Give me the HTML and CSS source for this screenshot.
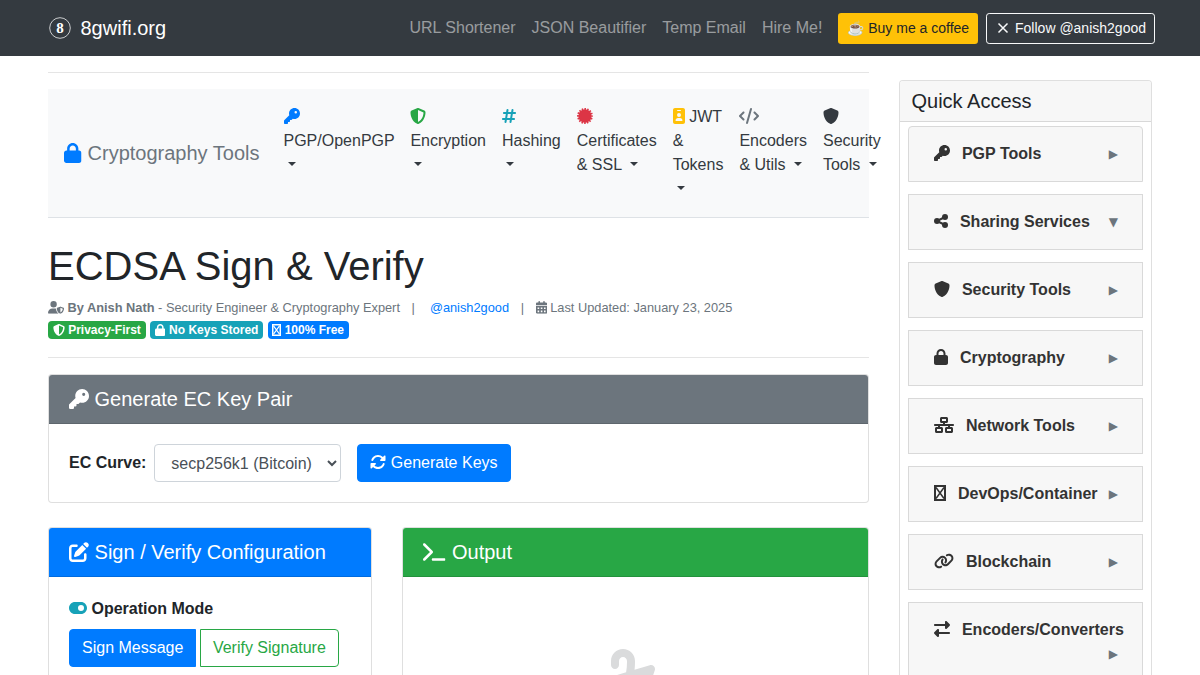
FILE: index.html
```html
<!DOCTYPE html>
<html lang="en">
  <head>
    <meta charset="UTF-8" />
    <meta name="viewport" content="width=device-width, initial-scale=1.0" />
    <title>ECDSA Sign &amp; Verify</title>
    <link rel="stylesheet" href="styles.css">
  </head>
  <body>
    <!-- Icon sprite -->
    <svg class="sprite" aria-hidden="true">
      <symbol id="key" viewBox="0 0 512 512"><path d="M336 352c97.2 0 176-78.8 176-176S433.2 0 336 0S160 78.8 160 176c0 18.7 2.9 36.8 8.3 53.7L7 391c-4.5 4.5-7 10.6-7 17v80c0 13.3 10.7 24 24 24h80c13.3 0 24-10.7 24-24V448h40c13.3 0 24-10.7 24-24V384h40c6.4 0 12.5-2.5 17-7l33.3-33.3c16.9 5.4 35 8.3 53.7 8.3zM376 96a40 40 0 1 1 0 80 40 40 0 1 1 0-80z" /></symbol>
      <symbol id="lock" viewBox="0 0 448 512"><path d="M144 144v48H304V144c0-44.2-35.8-80-80-80s-80 35.8-80 80zM80 192V144C80 64.5 144.5 0 224 0s144 64.5 144 144v48h16c35.3 0 64 28.7 64 64V448c0 35.3-28.7 64-64 64H64c-35.3 0-64-28.7-64-64V256c0-35.3 28.7-64 64-64H80z" /></symbol>
      <symbol id="shield-half" viewBox="0 0 512 512"><path d="M256 0c4.6 0 9.2 1 13.4 2.9L457.7 82.8c22 9.3 38.4 31 38.3 57.2c-.5 99.2-41.3 280.7-213.6 363.2c-16.7 8-36.1 8-52.8 0C57.3 420.7 16.5 239.2 16 140c-.1-26.2 16.3-47.9 38.3-57.2L242.7 2.9C246.8 1 251.4 0 256 0zm0 66.8V444.8C394 378 431.1 230.1 432 141.4L256 66.8z" /></symbol>
      <symbol id="shield" viewBox="0 0 512 512"><path d="M256 0c4.6 0 9.2 1 13.4 2.9L457.7 82.8c22 9.3 38.4 31 38.3 57.2c-.5 99.2-41.3 280.7-213.6 363.2c-16.7 8-36.1 8-52.8 0C57.3 420.7 16.5 239.2 16 140c-.1-26.2 16.3-47.9 38.3-57.2L242.7 2.9C246.8 1 251.4 0 256 0z" /></symbol>
      <symbol id="hashtag" viewBox="0 0 448 512"><path d="M181.3 32.4c17.4 2.9 29.2 19.4 26.3 36.8L197.8 128h95.1l11.5-69.3c2.9-17.4 19.4-29.2 36.8-26.3s29.2 19.4 26.3 36.8L357.8 128H416c17.7 0 32 14.3 32 32s-14.3 32-32 32H347.1L325.8 320H384c17.7 0 32 14.3 32 32s-14.3 32-32 32H315.1l-11.5 69.3c-2.9 17.4-19.4 29.2-36.8 26.3s-29.2-19.4-26.3-36.8l9.8-58.7H155.1l-11.5 69.3c-2.9 17.4-19.4 29.2-36.8 26.3s-29.2-19.4-26.3-36.8L90.2 384H32c-17.7 0-32-14.3-32-32s14.3-32 32-32h68.9l21.3-128H64c-17.7 0-32-14.3-32-32s14.3-32 32-32h68.9l11.5-69.3c2.9-17.4 19.4-29.2 36.8-26.3zM187.1 192L165.8 320h95.1l21.3-128H187.1z" /></symbol>
      <symbol id="certificate" viewBox="0 0 512 512">
        <circle cx="256" cy="256" r="214" />
        <circle cx="256" cy="256" r="220" fill="none" stroke="currentColor" stroke-width="70" pathLength="160" stroke-dasharray="5.5 4.5" stroke-dashoffset="2.75" />
      </symbol>
      <symbol id="id-badge" viewBox="0 0 384 512"><path fill-rule="evenodd" d="M64 0C28.7 0 0 28.7 0 64V448c0 35.3 28.7 64 64 64H320c35.3 0 64-28.7 64-64V64c0-35.3-28.7-64-64-64H64zm96 320h64c44.2 0 80 35.8 80 80c0 8.8-7.2 16-16 16H96c-8.8 0-16-7.2-16-16c0-44.2 35.8-80 80-80zm-32-96a64 64 0 1 1 128 0 64 64 0 1 1 -128 0zM144 64h96c8.8 0 16 7.2 16 16s-7.2 16-16 16H144c-8.8 0-16-7.2-16-16s7.2-16 16-16z" /></symbol>
      <symbol id="code" viewBox="0 0 640 512"><path d="M392.8 1.2c-17-4.9-34.7 5-39.6 22l-128 448c-4.9 17 5 34.7 22 39.6s34.7-5 39.6-22l128-448c4.9-17-5-34.7-22-39.6zm80.6 120.1c-12.5 12.5-12.5 32.8 0 45.3L562.7 256l-89.4 89.4c-12.5 12.5-12.5 32.8 0 45.3s32.8 12.5 45.3 0l112-112c12.5-12.5 12.5-32.8 0-45.3l-112-112c-12.5-12.5-32.8-12.5-45.3 0zm-306.7 0c-12.5-12.5-32.8-12.5-45.3 0l-112 112c-12.5 12.5-12.5 32.8 0 45.3l112 112c12.5 12.5 32.8 12.5 45.3 0s12.5-32.8 0-45.3L77.3 256l89.4-89.4c12.5-12.5 12.5-32.8 0-45.3z" /></symbol>
      <symbol id="user-shield" viewBox="0 0 640 512"><path d="M224 256A128 128 0 1 0 224 0a128 128 0 1 0 0 256zm-45.7 48C79.8 304 0 383.8 0 482.3C0 498.7 13.3 512 29.7 512H418.3c1.8 0 3.5-.2 5.3-.5c-76.3-55.1-99.8-141-103.1-200.2c-16.1-4.8-33.1-7.3-50.7-7.3H178.3zm308.8-78.3l-120 48C358 277.4 352 286.2 352 296c0 63.3 25.9 168.8 134.8 214.2c5.9 2.5 12.6 2.5 18.5 0C614.1 464.8 640 359.3 640 296c0-9.8-6-18.6-15.1-22.3l-120-48c-5.7-2.3-12.1-2.3-17.8 0zM591.4 312c-3.9 50.7-27.2 116.7-95.4 149.7V273.8L591.4 312z" /></symbol>
      <symbol id="calendar" viewBox="0 0 448 512"><path fill-rule="evenodd" d="M128 0c17.7 0 32 14.3 32 32V64H288V32c0-17.7 14.3-32 32-32s32 14.3 32 32V64h48c26.5 0 48 21.5 48 48v48H0V112C0 85.5 21.5 64 48 64H96V32c0-17.7 14.3-32 32-32zM0 192H448V464c0 26.5-21.5 48-48 48H48c-26.5 0-48-21.5-48-48V192zM64 256h64v64H64zM192 256h64v64h-64zM320 256h64v64h-64zM64 384h64v64H64zM192 384h64v64h-64zM320 384h64v64h-64z" /></symbol>
      <symbol id="box-x" viewBox="0 0 384 512"><path fill="none" stroke="currentColor" stroke-width="64" d="M32 32H352V480H32z" /><path fill="none" stroke="currentColor" stroke-width="48" d="M64 80L320 432M320 80L64 432" /></symbol>
      <symbol id="rotate" viewBox="0 0 512 512"><path d="M142.9 142.9c62.2-62.2 162.7-62.5 225.3-1L327 183c-6.9 6.9-8.9 17.2-5.2 26.2s12.5 14.8 22.2 14.8H472c13.3 0 24-10.7 24-24V72c0-9.7-5.8-18.5-14.8-22.2s-19.3-1.7-26.2 5.2L413.4 96.6c-87.6-86.5-228.7-86.2-315.8 1C73.2 122 55.6 150.7 44.8 181.4c-5.9 16.7 2.9 34.9 19.5 40.8s34.9-2.9 40.8-19.5c7.7-21.8 20.2-42.3 37.8-59.8zM16 312V440c0 9.7 5.8 18.5 14.8 22.2s19.3 1.7 26.2-5.2l41.6-41.6c87.6 86.5 228.7 86.2 315.8-1c24.4-24.4 42.1-53.1 52.9-83.7c5.9-16.7-2.9-34.9-19.5-40.8s-34.9 2.9-40.8 19.5c-7.7 21.8-20.2 42.3-37.8 59.8c-62.2 62.2-162.7 62.5-225.3 1L185 329c6.9-6.9 8.9-17.2 5.2-26.2s-12.5-14.8-22.2-14.8H40c-13.3 0-24 10.7-24 24z" /></symbol>
      <symbol id="edit" viewBox="0 0 512 512"><path d="M471.6 21.7c-21.9-21.9-57.3-21.9-79.2 0L362.3 51.7l97.9 97.9 30.1-30.1c21.9-21.9 21.9-57.3 0-79.2L471.6 21.7zm-299.2 220c-6.1 6.1-10.8 13.6-13.5 21.9l-29.6 88.8c-2.9 8.6-.6 18.1 5.8 24.6s15.9 8.7 24.6 5.8l88.8-29.6c8.2-2.7 15.7-7.4 21.9-13.5L437.7 172.3 339.7 74.3 172.4 241.7zM96 64C43 64 0 107 0 160V416c0 53 43 96 96 96H352c53 0 96-43 96-96V320c0-17.7-14.3-32-32-32s-32 14.3-32 32v96c0 17.7-14.3 32-32 32H96c-17.7 0-32-14.3-32-32V160c0-17.7 14.3-32 32-32h96c17.7 0 32-14.3 32-32s-14.3-32-32-32H96z" /></symbol>
      <symbol id="terminal" viewBox="0 0 576 512"><path d="M9.4 86.6C-3.1 74.1-3.1 53.9 9.4 41.4s32.8-12.5 45.3 0l192 192c12.5 12.5 12.5 32.8 0 45.3l-192 192c-12.5 12.5-32.8 12.5-45.3 0s-12.5-32.8 0-45.3L178.7 256 9.4 86.6zM256 416H544c17.7 0 32 14.3 32 32s-14.3 32-32 32H256c-17.7 0-32-14.3-32-32s14.3-32 32-32z" /></symbol>
      <symbol id="toggle" viewBox="0 0 576 512"><path d="M192 64C86 64 0 150 0 256S86 448 192 448H384c106 0 192-86 192-192s-86-192-192-192H192zm192 96a96 96 0 1 0 0 192 96 96 0 1 0 0-192z" fill-rule="evenodd" /></symbol>
      <symbol id="signature" viewBox="0 0 640 512"><path d="M192 128c0-17.7 14.3-32 32-32s32 14.3 32 32v7.8c0 27.7-2.4 55.3-7.1 82.5l-84.4 25.3c-40.6 12.2-68.4 49.6-68.4 92v71.9c0 40 32.5 72.5 72.5 72.5c26 0 50-13.9 62.9-36.5l13.9-24.3c26.8-47 46.5-97.7 58.4-150.5l94.4-28.3-12.5 37.5c-3.3 9.8-1.6 20.5 4.4 28.8s15.7 13.3 26 13.3H544c17.7 0 32-14.3 32-32s-14.3-32-32-32H460.4l18-53.9c3.8-11.3 .9-23.8-7.4-32.4s-20.7-11.8-32.2-8.4L316.4 198.1c2.4-20.7 3.6-41.4 3.6-62.3V128c0-53-43-96-96-96s-96 43-96 96v32c0 17.7 14.3 32 32 32s32-14.3 32-32V128z" /></symbol>
      <symbol id="share" viewBox="0 0 448 512">
        <circle cx="352" cy="128" r="96" />
        <circle cx="96" cy="256" r="96" />
        <circle cx="352" cy="384" r="96" />
        <path d="M352 128L96 256L352 384" fill="none" stroke="currentColor" stroke-width="64" />
      </symbol>
      <symbol id="network" viewBox="0 0 640 512"><path d="M256 64H384v64H256V64zM240 0c-26.5 0-48 21.5-48 48v96c0 26.5 21.5 48 48 48h48v32H32c-17.7 0-32 14.3-32 32s14.3 32 32 32h96v32H80c-26.5 0-48 21.5-48 48v96c0 26.5 21.5 48 48 48H240c26.5 0 48-21.5 48-48V368c0-26.5-21.5-48-48-48H192V288H448v32H400c-26.5 0-48 21.5-48 48v96c0 26.5 21.5 48 48 48H560c26.5 0 48-21.5 48-48V368c0-26.5-21.5-48-48-48H512V288h96c17.7 0 32-14.3 32-32s-14.3-32-32-32H352V192h48c26.5 0 48-21.5 48-48V48c0-26.5-21.5-48-48-48H240zM96 448V384H224v64H96zm320-64H544v64H416V384z" fill-rule="evenodd" /></symbol>
      <symbol id="link" viewBox="0 0 640 512"><path d="M579.8 267.7c56.5-56.5 56.5-148 0-204.5c-50-50-128.8-56.5-186.3-15.4l-1.6 1.1c-14.4 10.3-17.7 30.3-7.4 44.6s30.3 17.7 44.6 7.4l1.6-1.1c32.1-22.9 76-19.3 103.8 8.6c31.5 31.5 31.5 82.5 0 114L422.3 334.8c-31.5 31.5-82.5 31.5-114 0c-27.9-27.9-31.5-71.8-8.6-103.8l1.1-1.6c10.3-14.4 6.9-34.4-7.4-44.6s-34.4-6.9-44.6 7.4l-1.1 1.6C206.5 251.2 213 330 263 380c56.5 56.5 148 56.5 204.5 0L579.8 267.7zM60.2 244.3c-56.5 56.5-56.5 148 0 204.5c50 50 128.8 56.5 186.3 15.4l1.6-1.1c14.4-10.3 17.7-30.3 7.4-44.6s-30.3-17.7-44.6-7.4l-1.6 1.1c-32.1 22.9-76 19.3-103.8-8.6C74 372 74 321 105.5 289.5L217.7 177.2c31.5-31.5 82.5-31.5 114 0c27.9 27.9 31.5 71.8 8.6 103.9l-1.1 1.6c-10.3 14.4-6.9 34.4 7.4 44.6s34.4 6.9 44.6-7.4l1.1-1.6C433.5 260.8 427 182 377 132c-56.5-56.5-148-56.5-204.5 0L60.2 244.3z" /></symbol>
      <symbol id="exchange" viewBox="0 0 512 512"><path d="M32 96l320 0V32c0-12.9 7.8-24.6 19.8-29.6s25.7-2.2 34.9 6.9l96 96c6 6 9.4 14.1 9.4 22.6s-3.4 16.6-9.4 22.6l-96 96c-9.2 9.2-22.9 11.9-34.9 6.9s-19.8-16.6-19.8-29.6V160L32 160c-17.7 0-32-14.3-32-32s14.3-32 32-32zM480 352c17.7 0 32 14.3 32 32s-14.3 32-32 32H160v64c0 12.9-7.8 24.6-19.8 29.6s-25.7 2.2-34.9-6.9l-96-96c-6-6-9.4-14.1-9.4-22.6s3.4-16.6 9.4-22.6l96-96c9.2-9.2 22.9-11.9 34.9-6.9s19.8 16.6 19.8 29.6l0 64H480z" /></symbol>
    </svg>

    <header class="topbar">
      <a class="brand" href="#">
        <svg class="logo" viewBox="0 0 30 30" aria-hidden="true">
          <circle cx="15" cy="15" r="10.3" />
          <text x="15" y="20" text-anchor="middle">8</text>
        </svg>
        8gwifi.org
      </a>
      <nav class="top-links">
        <a href="#">URL Shortener</a>
        <a href="#">JSON Beautifier</a>
        <a href="#">Temp Email</a>
        <a href="#">Hire Me!</a>
        <a class="btn btn-sm btn-warning" href="#">☕ Buy me a coffee</a>
        <a class="btn btn-sm btn-outline-light" href="#"><svg class="cross" viewBox="0 0 16 14" aria-hidden="true"><path d="M3.5 2.5L12.5 11.5M12.5 2.5L3.5 11.5" /></svg> Follow @anish2good</a>
      </nav>
    </header>

    <div class="page">
      <main>
        <hr class="first-line" />

        <nav class="tools-nav">
          <a class="tools-brand" href="#"><svg class="icon w-448 blue"><use href="#lock" /></svg> Cryptography Tools</a>
          <a class="tool" href="#"><svg class="icon blue"><use href="#key" /></svg> PGP/OpenPGP <i class="caret"></i></a>
          <a class="tool" href="#"><svg class="icon green"><use href="#shield-half" /></svg> Encryption <i class="caret"></i></a>
          <a class="tool" href="#"><svg class="icon w-448 teal"><use href="#hashtag" /></svg> Hashing <i class="caret"></i></a>
          <a class="tool" href="#"><svg class="icon red"><use href="#certificate" /></svg> Certificates &amp; SSL <i class="caret"></i></a>
          <a class="tool" href="#"><svg class="icon w-384 yellow"><use href="#id-badge" /></svg> JWT &amp; Tokens <i class="caret"></i></a>
          <a class="tool" href="#"><svg class="icon w-640 gray"><use href="#code" /></svg> Encoders &amp; Utils <i class="caret"></i></a>
          <a class="tool" href="#"><svg class="icon"><use href="#shield" /></svg> Security Tools <i class="caret"></i></a>
        </nav>

        <h1>ECDSA Sign &amp; Verify</h1>
        <div class="byline">
          <svg class="icon w-640"><use href="#user-shield" /></svg> <strong>By Anish Nath</strong> - Security Engineer &amp; Cryptography Expert
          <span class="sep">|</span>
          <a class="handle" href="#">@anish2good</a>
          <span class="sep">|</span>
          <svg class="icon w-448 date-icon"><use href="#calendar" /></svg>Last Updated: January 23, 2025
        </div>
        <div class="badges">
          <span class="badge bg-green"><svg class="icon"><use href="#shield-half" /></svg> Privacy-First</span>
          <span class="badge bg-teal"><svg class="icon w-448"><use href="#lock" /></svg> No Keys Stored</span>
          <span class="badge bg-blue"><svg class="icon w-384"><use href="#box-x" /></svg> 100% Free</span>
        </div>
        <hr />

        <section class="card">
          <h5 class="card-header bg-gray"><svg class="icon"><use href="#key" /></svg> Generate EC Key Pair</h5>
          <div class="card-body key-form">
            <label for="curve">EC Curve:</label>
            <select id="curve">
              <option>secp256k1 (Bitcoin)</option>
            </select>
            <button class="btn btn-primary"><svg class="icon"><use href="#rotate" /></svg> Generate Keys</button>
          </div>
        </section>

        <div class="panels">
          <section class="card">
            <h5 class="card-header bg-blue"><svg class="icon"><use href="#edit" /></svg> Sign / Verify Configuration</h5>
            <div class="card-body">
              <div class="mode-label"><svg class="icon w-576 teal"><use href="#toggle" /></svg> Operation Mode</div>
              <div class="mode-group">
                <button class="btn btn-primary">Sign Message</button>
                <button class="btn btn-outline-success">Verify Signature</button>
              </div>
            </div>
          </section>

          <section class="card">
            <h5 class="card-header bg-green"><svg class="icon w-576"><use href="#terminal" /></svg> Output</h5>
            <div class="card-body placeholder">
              <svg class="icon w-640"><use href="#signature" /></svg>
            </div>
          </section>
        </div>
      </main>

      <aside class="card quick">
        <h5 class="quick-header">Quick Access</h5>
        <div class="quick-list">
          <a class="quick-item" href="#"><svg class="icon"><use href="#key" /></svg> PGP Tools<span class="arrow">▶</span></a>
          <a class="quick-item" href="#"><svg class="icon w-448"><use href="#share" /></svg> Sharing Services<span class="arrow">▼</span></a>
          <a class="quick-item" href="#"><svg class="icon"><use href="#shield" /></svg> Security Tools<span class="arrow">▶</span></a>
          <a class="quick-item" href="#"><svg class="icon w-448"><use href="#lock" /></svg> Cryptography<span class="arrow">▶</span></a>
          <a class="quick-item" href="#"><svg class="icon w-640"><use href="#network" /></svg> Network Tools<span class="arrow">▶</span></a>
          <a class="quick-item" href="#"><svg class="icon w-384"><use href="#box-x" /></svg> DevOps/Container<span class="arrow">▶</span></a>
          <a class="quick-item" href="#"><svg class="icon w-640"><use href="#link" /></svg> Blockchain<span class="arrow">▶</span></a>
          <a class="quick-item" href="#"><svg class="icon"><use href="#exchange" /></svg> Encoders/Converters<span class="arrow">▶</span></a>
        </div>
      </aside>
    </div>
  </body>
</html>
```

FILE: styles.css
```css
/*
  Global styles
*/

* {
  margin: 0;
  padding: 0;
  box-sizing: border-box;
}
:root {
  --blue: #007bff;
  --green: #28a745;
  --teal: #17a2b8;
  --red: #dc3545;
  --yellow: #ffc107;
  --gray: #6c757d;
  --dark: #343a40;
  --line: rgba(0, 0, 0, 0.125);
}
body {
  height: 100vh;
  overflow: hidden;
  color: #212529;
  font-size: 16px;
  line-height: 1.5;
  background-color: #fff;
  font-family: "Liberation Sans", Arial, sans-serif;
}
a {
  color: inherit;
  text-decoration: none;
}
hr {
  border: 0;
  margin: 16px 0;
  border-top: 1px solid rgba(0, 0, 0, 0.1);
}
h1 {
  font-size: 40px;
  font-weight: 400;
  line-height: 1.2;
  margin: 24px 0 8px;
}
h5 {
  font-size: 20px;
  font-weight: 400;
  line-height: 1.2;
}

/*
  Utilities
*/

.blue { color: var(--blue); }
.green { color: var(--green); }
.teal { color: var(--teal); }
.red { color: var(--red); }
.yellow { color: var(--yellow); }
.gray { color: var(--gray); }
.bg-blue { background-color: var(--blue); }
.bg-green { background-color: var(--green); }
.bg-teal { background-color: var(--teal); }
.bg-gray { background-color: var(--gray); }

.sprite {
  display: none;
}
.icon {
  width: 1em;
  height: 1em;
  fill: currentColor;
  vertical-align: -0.125em;
}
.icon.w-384 { width: 0.75em; }
.icon.w-448 { width: 0.875em; }
.icon.w-576 { width: 1.125em; }
.icon.w-640 { width: 1.25em; }

.btn {
  display: inline-block;
  color: #fff;
  font: inherit;
  padding: 6px 12px;
  border-radius: 4px;
  white-space: nowrap;
  border: 1px solid transparent;
  background-color: transparent;
}
.btn-primary {
  border-color: var(--blue);
  background-color: var(--blue);
}
.btn-outline-success {
  color: var(--green);
  border-color: var(--green);
}
.btn-sm {
  font-size: 14px;
  padding: 4px 8px;
  border-radius: 3.2px;
}

/*
  Component styles
*/

/* [1] Top bar */
.topbar {
  height: 56px;
  padding: 0 45px;
  display: flex;
  align-items: center;
  justify-content: space-between;
  background-color: var(--dark);
}
.brand {
  display: flex;
  gap: 5.5px;
  color: #fff;
  font-size: 20px;
  align-items: center;
}
.logo {
  width: 30px;
  height: 30px;
}
.logo circle {
  fill: none;
  stroke: #c9cbcd;
}
.logo text {
  fill: #fff;
  font: bold 15px "Liberation Serif", serif;
}
.top-links {
  display: flex;
  gap: 16px;
  align-items: center;
  color: rgba(255, 255, 255, 0.5);
}
.top-links .btn-warning {
  color: #212529;
  background-color: var(--yellow);
}
.top-links .btn-outline-light {
  color: #f8f9fa;
  margin-left: -8px;
  border-color: #f8f9fa;
}
.cross {
  width: 16px;
  height: 14px;
  fill: none;
  stroke: currentColor;
  stroke-width: 1.5;
  vertical-align: -2px;
}

/* [2] Layout */
.page {
  display: grid;
  gap: 30px;
  padding: 0 48px;
  align-items: start;
  grid-template-columns: 820.5px 253.5px;
}
main {
  min-width: 0;
}
.panels {
  display: grid;
  gap: 30px;
  margin-top: 24px;
  grid-template-columns: 324.4px 1fr;
}

/* [3] Tools navigation */
.tools-nav {
  display: flex;
  height: 129px;
  padding: 8px 16px;
  color: var(--dark);
  background-color: #f8f9fa;
  border-bottom: 1px solid #dee2e6;
}
.tools-brand {
  font-size: 20px;
  margin-right: 16px;
  align-self: center;
  white-space: nowrap;
  color: var(--gray);
}
.tools-brand .icon {
  margin-right: 0.5px;
}
.tool {
  flex: none;
  padding: 8px;
  width: min-content;
}
.caret {
  display: inline-block;
  margin-left: 0.255em;
  vertical-align: 0.255em;
  border-top: 0.3em solid;
  border-left: 0.3em solid transparent;
  border-right: 0.3em solid transparent;
}

/* [4] Title */
.byline {
  color: var(--gray);
  font-size: 12.8px;
  line-height: 19px;
}
.byline .sep {
  margin: 0 8px;
}
.byline .handle {
  color: var(--blue);
  margin-left: 3.5px;
}
.byline .date-icon {
  margin-right: 3.5px;
}
.badges {
  display: flex;
  gap: 4.3px;
  margin-top: 4px;
}
.badge {
  color: #fff;
  height: 18px;
  font-size: 12px;
  font-weight: 700;
  line-height: 18px;
  padding: 0 4.8px;
  border-radius: 4px;
}
.badge .w-448 {
  margin-right: 0.5px;
}
.badges + hr {
  margin-top: 18px;
}

/* [5] Cards */
.card {
  border-radius: 4px;
  border: 1px solid var(--line);
  background-color: #fff;
}
.card-header {
  color: #fff;
  padding: 12px 20px;
  border-radius: 3px 3px 0 0;
  border-bottom: 1px solid var(--line);
}
.card-header .w-576 {
  margin-right: 0.5px;
}
.card-body {
  padding: 20px;
}
.key-form {
  display: flex;
  align-items: center;
}
.key-form label {
  font-weight: 700;
  margin-right: 8px;
}
.key-form select {
  width: 187px;
  height: 38px;
  color: #495057;
  font: inherit;
  padding: 6px 12px;
  margin-right: 16px;
  border-radius: 4px;
  border: 1px solid #ced4da;
  background-color: #fff;
}
.mode-label {
  font-weight: 700;
  margin-bottom: 8px;
}
.mode-group {
  display: flex;
  gap: 3.5px;
}
.mode-group .btn:first-child {
  border-radius: 4px 0 0 4px;
}
.mode-group .btn:last-child {
  border-radius: 0 4px 4px 0;
}
.placeholder {
  color: #dadbdc;
  font-size: 64px;
  line-height: 1;
  padding-top: 68px;
  text-align: center;
}

/* [6] Quick access */
.quick {
  margin-top: 24px;
}
.quick-header {
  padding: 8px 12px;
  background-color: #f7f7f7;
  border-radius: 3px 3px 0 0;
  border-bottom: 1px solid var(--line);
}
.quick-list {
  display: grid;
  gap: 12px;
  padding: 4px 8px;
}
.quick-item {
  color: #333;
  font-weight: 700;
  padding: 15px 17px 15px 25px;
  background-color: #f7f7f7;
  border: 1px solid #d9d9d9;
}
.quick-item:first-child {
  border-radius: 4px 4px 0 0;
}
.quick-item .icon {
  margin-right: 8px;
}
.quick-item .arrow {
  float: right;
  font: 12px/25px "DejaVu Sans", sans-serif;
  height: 24px;
  margin-right: 7px;
  color: var(--gray);
}
```
